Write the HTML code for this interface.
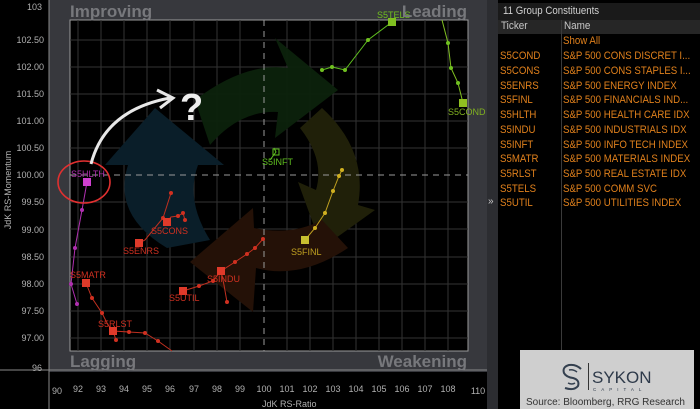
<!DOCTYPE html>
<html><head><meta charset="utf-8"><style>
html,body{margin:0;padding:0;background:#000;width:700px;height:409px;overflow:hidden;font-family:"Liberation Sans",sans-serif}
.p{position:absolute}
.row{position:absolute;left:500px;color:#e0801c;font-size:11px;white-space:nowrap;transform-origin:0 0;transform:scaleX(.88)}
.nm{position:absolute;left:563px;color:#e0801c;font-size:11px;white-space:nowrap;transform-origin:0 0;transform:scaleX(.88)}
</style></head><body>
<svg class="p" style="left:0;top:0" width="700" height="409" viewBox="0 0 700 409">
<rect x="0" y="0" width="700" height="409" fill="#000"/>
<rect x="49" y="0" width="438" height="409" fill="#37383d"/>
<rect x="49" y="372" width="438" height="37" fill="#000"/>
<line x1="0" y1="370" x2="487" y2="370" stroke="#8a8a8a" stroke-width="1"/>
<line x1="49" y1="0" x2="49" y2="409" stroke="#8a8a8a" stroke-width="1"/>
<rect x="70" y="20" width="398" height="331" fill="#000" stroke="#9a9a9a" stroke-width="1"/>
<g stroke="#333" stroke-width="1">
<line x1="78" y1="20" x2="78" y2="351"/><line x1="101" y1="20" x2="101" y2="351"/><line x1="124" y1="20" x2="124" y2="351"/><line x1="147" y1="20" x2="147" y2="351"/><line x1="170" y1="20" x2="170" y2="351"/><line x1="194" y1="20" x2="194" y2="351"/><line x1="217" y1="20" x2="217" y2="351"/><line x1="240" y1="20" x2="240" y2="351"/><line x1="287" y1="20" x2="287" y2="351"/><line x1="310" y1="20" x2="310" y2="351"/><line x1="333" y1="20" x2="333" y2="351"/><line x1="356" y1="20" x2="356" y2="351"/><line x1="379" y1="20" x2="379" y2="351"/><line x1="402" y1="20" x2="402" y2="351"/><line x1="425" y1="20" x2="425" y2="351"/><line x1="448" y1="20" x2="448" y2="351"/>
<line x1="70" y1="40" x2="468" y2="40"/><line x1="70" y1="67" x2="468" y2="67"/><line x1="70" y1="94" x2="468" y2="94"/><line x1="70" y1="121" x2="468" y2="121"/><line x1="70" y1="148" x2="468" y2="148"/><line x1="70" y1="202" x2="468" y2="202"/><line x1="70" y1="229" x2="468" y2="229"/><line x1="70" y1="257" x2="468" y2="257"/><line x1="70" y1="284" x2="468" y2="284"/><line x1="70" y1="311" x2="468" y2="311"/><line x1="70" y1="338" x2="468" y2="338"/>
</g>
<path d="M195 100 Q245 62 288 68 L275 38 L338 90 L275 138 L278 112 Q240 110 210 145 Z" fill="#0c220c" opacity=".95"/>
<path d="M167 248 Q112 215 128 165 L105 165 L155 108 L224 165 L198 165 Q185 200 210 240 Z" fill="#0a1e29"/>
<path d="M322 108 Q368 150 358 205 L375 210 L322 248 L298 182 L316 190 Q325 160 300 128 Z" fill="#202009"/>
<path d="M348 248 Q300 280 256 268 L253 312 L190 262 L253 208 L254 228 Q292 236 322 220 Z" fill="#241107"/>
<line x1="264" y1="20" x2="264" y2="351" stroke="#9a9a9a" stroke-dasharray="6,5"/>
<line x1="70" y1="175" x2="468" y2="175" stroke="#9a9a9a" stroke-dasharray="6,5"/>
<g fill="none" stroke-width="1">
<polyline points="87,182 82,210 75,248 71,284 77,304" stroke="#b030b0"/>
<polyline points="86,283 92,298 102,313 108,325 113,331 116,340" stroke="#c03020"/>
<polyline points="113,331 129,332 145,333 158,341 172,351" stroke="#c03020"/>
<polyline points="139,243 145,240 163,218 171,193" stroke="#c03020"/>
<polyline points="167,222 171,217 178,216 183,213 185,220" stroke="#c03020"/>
<polyline points="183,291 199,286 213,281 221,271 235,262 247,254 255,248 263,239" stroke="#c03020"/>
<polyline points="221,271 224,285 227,302" stroke="#c03020"/>
<polyline points="305,240 315,228 325,213 333,191 339,176 342,170" stroke="#c0a020"/>
<polyline points="322,70 332,67 345,70 368,40 392,22" stroke="#60c020"/>
<polyline points="442,20 448,43 451,68 458,83 463,103" stroke="#80c020"/>
<polyline points="270,160 276,152 274,148" stroke="#60c020"/>
</g>
<g>
<g fill="#b030b0"><circle cx="82" cy="210" r="2"/><circle cx="75" cy="248" r="2"/><circle cx="71" cy="284" r="2"/><circle cx="77" cy="304" r="2"/></g>
<g fill="#d03020"><circle cx="92" cy="298" r="2"/><circle cx="102" cy="313" r="2"/><circle cx="116" cy="340" r="2"/><circle cx="129" cy="332" r="2"/><circle cx="145" cy="333" r="2"/><circle cx="158" cy="341" r="2"/><circle cx="163" cy="218" r="2"/><circle cx="171" cy="193" r="2"/><circle cx="178" cy="216" r="2"/><circle cx="183" cy="213" r="2"/><circle cx="185" cy="220" r="2"/><circle cx="199" cy="286" r="2"/><circle cx="213" cy="281" r="2"/><circle cx="235" cy="262" r="2"/><circle cx="247" cy="254" r="2"/><circle cx="255" cy="248" r="2"/><circle cx="263" cy="239" r="2"/><circle cx="227" cy="302" r="2"/></g>
<g fill="#d0b020"><circle cx="315" cy="228" r="2"/><circle cx="325" cy="213" r="2"/><circle cx="333" cy="191" r="2"/><circle cx="339" cy="176" r="2"/><circle cx="342" cy="170" r="2"/></g>
<g fill="#70c020"><circle cx="332" cy="67" r="2"/><circle cx="345" cy="70" r="2"/><circle cx="368" cy="40" r="2"/><circle cx="322" cy="70" r="2"/><circle cx="448" cy="43" r="2"/><circle cx="451" cy="68" r="2"/><circle cx="458" cy="83" r="2"/></g>
</g>
<rect x="83" y="178" width="8" height="8" fill="#d040d0"/>
<rect x="82" y="279" width="8" height="8" fill="#e03a2a"/>
<rect x="109" y="327" width="8" height="8" fill="#e03a2a"/>
<rect x="135" y="239" width="8" height="8" fill="#e03a2a"/>
<rect x="163" y="218" width="8" height="8" fill="#e03a2a"/>
<rect x="179" y="287" width="8" height="8" fill="#e03a2a"/>
<rect x="217" y="267" width="8" height="8" fill="#e03a2a"/>
<rect x="301" y="236" width="8" height="8" fill="#c8c030"/>
<rect x="273" y="149" width="6" height="6" fill="none" stroke="#60c020"/>
<rect x="388" y="18" width="8" height="8" fill="#80c020"/>
<rect x="459" y="99" width="8" height="8" fill="#90c020"/>
<g font-size="9" font-family="Liberation Sans, sans-serif">
<text x="71" y="177" fill="#b030b0">S5HLTH</text>
<text x="70" y="278" fill="#d03020">S5MATR</text>
<text x="98" y="327" fill="#d03020">S5RLST</text>
<text x="123" y="254" fill="#d03020">S5ENRS</text>
<text x="151" y="234" fill="#d03020">S5CONS</text>
<text x="169" y="301" fill="#d03020">S5UTIL</text>
<text x="207" y="282" fill="#d03020">S5INDU</text>
<text x="291" y="255" fill="#c0a020">S5FINL</text>
<text x="262" y="165" fill="#60c020">S5INFT</text>
<text x="377" y="18" fill="#70c020">S5TELS</text>
<text x="448" y="115" fill="#80b020">S5COND</text>
</g>
<g font-size="17" font-weight="bold" fill="#77787c">
<text x="70" y="17">Improving</text>
<text x="467" y="17" text-anchor="end">Leading</text>
<text x="70" y="367">Lagging</text>
<text x="467" y="367" text-anchor="end">Weakening</text>
</g>
<ellipse cx="84" cy="182" rx="26" ry="21" fill="none" stroke="#e03030" stroke-width="1.6"/>
<path d="M91 164 Q105 110 170 98" fill="none" stroke="#e8e8e8" stroke-width="3"/>
<path d="M157 90 L173 98 L160 108" fill="none" stroke="#e8e8e8" stroke-width="3"/>
<text x="180" y="120" font-size="38" font-weight="bold" fill="#eeeeee">?</text>
<g font-size="9" fill="#b0b0b0" text-anchor="end">
<text x="42" y="10">103</text><text x="44" y="43">102.50</text><text x="44" y="70">102.00</text><text x="44" y="97">101.50</text><text x="44" y="124">101.00</text><text x="44" y="151">100.50</text><text x="44" y="178">100.00</text><text x="44" y="205">99.50</text><text x="44" y="233">99.00</text><text x="44" y="260">98.50</text><text x="44" y="287">98.00</text><text x="44" y="314">97.50</text><text x="44" y="341">97.00</text><text x="42" y="371">96</text>
</g>
<text transform="translate(11,190) rotate(-90)" font-size="9" fill="#b0b0b0" text-anchor="middle">JdK RS-Momentum</text>
<g font-size="9" fill="#b0b0b0" text-anchor="middle">
<text x="57" y="394">90</text><text x="78" y="392">92</text><text x="101" y="392">93</text><text x="124" y="392">94</text><text x="147" y="392">95</text><text x="170" y="392">96</text><text x="194" y="392">97</text><text x="217" y="392">98</text><text x="240" y="392">99</text><text x="264" y="392">100</text><text x="287" y="392">101</text><text x="310" y="392">102</text><text x="333" y="392">103</text><text x="356" y="392">104</text><text x="379" y="392">105</text><text x="402" y="392">106</text><text x="425" y="392">107</text><text x="448" y="392">108</text><text x="478" y="394">110</text>
</g>
<text x="262" y="407" font-size="9" fill="#b0b0b0">JdK RS-Ratio</text>
<rect x="487" y="0" width="11" height="409" fill="#2c2d31"/>
<text x="488" y="204" font-size="10" fill="#ccc">»</text>
<rect x="498" y="3" width="202" height="17" fill="#1a1a1a"/>
<rect x="498" y="20" width="202" height="14" fill="#262626"/>
<line x1="561.5" y1="20" x2="561.5" y2="409" stroke="#3a3a3a"/>
<rect x="520" y="350" width="174" height="59" fill="#cfcfcf"/>
<line x1="588.5" y1="363" x2="588.5" y2="390" stroke="#333" stroke-width="1"/>
<path d="M581 369 Q576 364 569 365 Q562 367 564 373 Q566 377 573 378 Q580 380 578 386 Q574 391 565 388" fill="none" stroke="#34404f" stroke-width="2"/>
<path d="M577 372 Q573 369 569 370 M568 383 Q572 385 575 383" fill="none" stroke="#34404f" stroke-width="1.5"/>
<text x="592" y="383" font-size="17" fill="#2e3a4a">SYKON</text>
<text x="593" y="391" font-size="4.5" fill="#2e3a4a" letter-spacing="5">CAPITAL</text>
<text x="526" y="405" font-size="10" fill="#333">Source: Bloomberg, RRG Research</text>
</svg>
<div class="p" style="left:503px;top:5px;color:#d0d0d0;font-size:11px;transform-origin:0 0;transform:scaleX(.88);white-space:nowrap">11 Group Constituents</div>
<div class="p" style="left:501px;top:20px;color:#c8c8c8;font-size:11px;transform-origin:0 0;transform:scaleX(.9)">Ticker</div>
<div class="p" style="left:564px;top:20px;color:#c8c8c8;font-size:11px;transform-origin:0 0;transform:scaleX(.9)">Name</div>
<div class="nm" style="top:35px">Show All</div>
<div class="row" style="top:50px">S5COND</div><div class="nm" style="top:50px">S&amp;P 500 CONS DISCRET I...</div>
<div class="row" style="top:65px">S5CONS</div><div class="nm" style="top:65px">S&amp;P 500 CONS STAPLES I...</div>
<div class="row" style="top:80px">S5ENRS</div><div class="nm" style="top:80px">S&amp;P 500 ENERGY INDEX</div>
<div class="row" style="top:94px">S5FINL</div><div class="nm" style="top:94px">S&amp;P 500 FINANCIALS IND...</div>
<div class="row" style="top:109px">S5HLTH</div><div class="nm" style="top:109px">S&amp;P 500 HEALTH CARE IDX</div>
<div class="row" style="top:124px">S5INDU</div><div class="nm" style="top:124px">S&amp;P 500 INDUSTRIALS IDX</div>
<div class="row" style="top:139px">S5INFT</div><div class="nm" style="top:139px">S&amp;P 500 INFO TECH INDEX</div>
<div class="row" style="top:153px">S5MATR</div><div class="nm" style="top:153px">S&amp;P 500 MATERIALS INDEX</div>
<div class="row" style="top:168px">S5RLST</div><div class="nm" style="top:168px">S&amp;P 500 REAL ESTATE IDX</div>
<div class="row" style="top:183px">S5TELS</div><div class="nm" style="top:183px">S&amp;P 500 COMM SVC</div>
<div class="row" style="top:197px">S5UTIL</div><div class="nm" style="top:197px">S&amp;P 500 UTILITIES INDEX</div>
</body></html>
